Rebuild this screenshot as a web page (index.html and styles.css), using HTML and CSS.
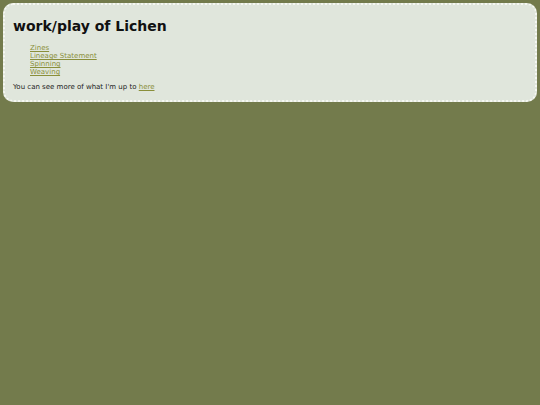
FILE: index.html
```html
<!DOCTYPE html>
<html>
<head>
<meta charset="utf-8">
<link rel="stylesheet" href="styles.css">
</head>
<body>
<div class="box">
<h1 class="title">work/play of Lichen</h1>
<ul class="links">
<li><a href="#">Zines</a></li>
<li><a href="#">Lineage Statement</a></li>
<li><a href="#">Spinning</a></li>
<li><a href="#">Weaving</a></li>
</ul>
<p class="more">You can see more of what I'm up to <a href="#">here</a></p>
</div>
</body>
</html>
```
FILE: styles.css
```css
html, body {
  margin: 0;
  padding: 0;
}
body {
  background: #737b4c;
  font-family: "DejaVu Sans", Verdana, sans-serif;
  font-size: 7px;
  color: #222;
  padding: 3px;
}
.box {
  background: #e0e6dc;
  border: 2px dotted #f6f8f2;
  border-radius: 10px;
  padding: 13px 8px 9px 8px;
}
.title {
  margin: 0 0 10px 0;
  font-size: 14px;
  font-weight: bold;
  color: #111;
}
.links {
  list-style: none;
  margin: 0 0 7px 0;
  padding: 0 0 0 17px;
  line-height: 8px;
}
.links a, .more a {
  color: #8a8f3a;
}
.more {
  margin: 0;
}
```
